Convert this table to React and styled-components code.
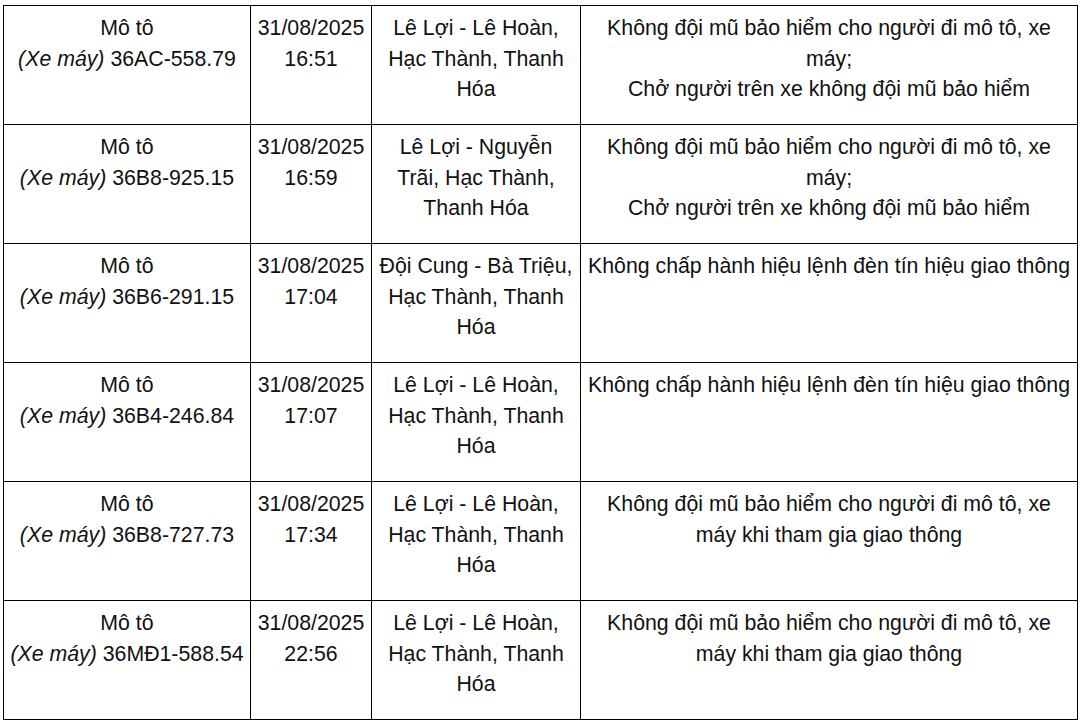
import styled, { createGlobalStyle } from "styled-components";

const GlobalStyle = createGlobalStyle`
  body {
    margin: 0;
    background: #ffffff;
    font-family: "Liberation Sans", Arial, sans-serif;
  }
`;

const Page = styled.div`
  padding: 5px 0 0 3px;
`;

const Table = styled.table`
  border-collapse: collapse;
  table-layout: fixed;
  width: 1074px;
  color: #111;
  font-size: 21.3px;
  line-height: 30.5px;
`;

const Row = styled.tr`
  height: 119px;
`;

const Cell = styled.td`
  border: 1px solid #000;
  vertical-align: top;
  text-align: center;
  padding: 7px 5px 0;
`;

const Kind = styled.em`
  font-style: italic;
`;

// Dữ liệu vi phạm
const rows = [
  {
    plate: "36AC-558.79",
    time: "16:51",
    place: "Lê Lợi - Lê Hoàn, Hạc Thành, Thanh Hóa",
    acts: ["Không đội mũ bảo hiểm cho người đi mô tô, xe máy;", "Chở người trên xe không đội mũ bảo hiểm"],
  },
  {
    plate: "36B8-925.15",
    time: "16:59",
    place: "Lê Lợi - Nguyễn Trãi, Hạc Thành, Thanh Hóa",
    acts: ["Không đội mũ bảo hiểm cho người đi mô tô, xe máy;", "Chở người trên xe không đội mũ bảo hiểm"],
  },
  {
    plate: "36B6-291.15",
    time: "17:04",
    place: "Đội Cung - Bà Triệu, Hạc Thành, Thanh Hóa",
    acts: ["Không chấp hành hiệu lệnh đèn tín hiệu giao thông"],
  },
  {
    plate: "36B4-246.84",
    time: "17:07",
    place: "Lê Lợi - Lê Hoàn, Hạc Thành, Thanh Hóa",
    acts: ["Không chấp hành hiệu lệnh đèn tín hiệu giao thông"],
  },
  {
    plate: "36B8-727.73",
    time: "17:34",
    place: "Lê Lợi - Lê Hoàn, Hạc Thành, Thanh Hóa",
    acts: ["Không đội mũ bảo hiểm cho người đi mô tô, xe máy khi tham gia giao thông"],
  },
  {
    plate: "36MĐ1-588.54",
    time: "22:56",
    place: "Lê Lợi - Lê Hoàn, Hạc Thành, Thanh Hóa",
    acts: ["Không đội mũ bảo hiểm cho người đi mô tô, xe máy khi tham gia giao thông"],
  },
];

const App = () => {
  return (
    <Page>
      <GlobalStyle />
      <Table>
        <colgroup>
          <col style={{ width: 247 }} />
          <col style={{ width: 121 }} />
          <col style={{ width: 209 }} />
          <col style={{ width: 497 }} />
        </colgroup>
        <tbody>
          {rows.map((r) => (
            <Row key={r.plate}>
              <Cell>
                Mô tô
                <br />
                <Kind>(Xe máy)</Kind> {r.plate}
              </Cell>
              <Cell>
                31/08/2025
                <br />
                {r.time}
              </Cell>
              <Cell>{r.place}</Cell>
              <Cell>
                {r.acts.map((a, i) => (
                  <span key={i}>
                    {i > 0 && <br />}
                    {a}
                  </span>
                ))}
              </Cell>
            </Row>
          ))}
        </tbody>
      </Table>
    </Page>
  );
};

export default App;
